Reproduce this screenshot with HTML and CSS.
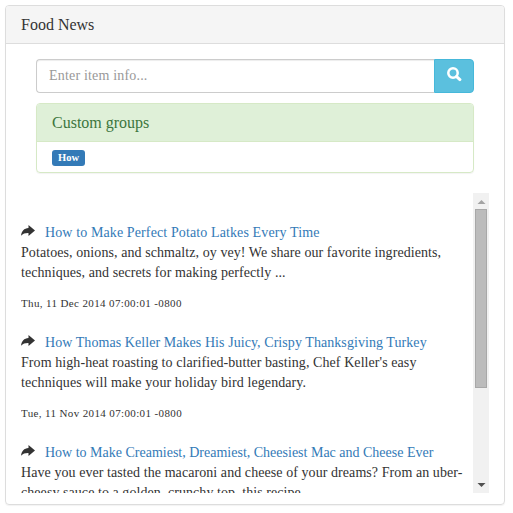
FILE: index.html
```
<!DOCTYPE html>
<html lang="en">
<head>
<meta charset="utf-8">
<title>Food News</title>
<link rel="stylesheet" href="styles.css">
</head>
<body>
<section class="panel">
  <h1 class="panel-heading">Food News</h1>
  <div class="panel-body">
    <form class="search">
      <input class="search-input" type="text" placeholder="Enter item info...">
      <button class="search-button" type="button" aria-label="Search">
        <svg width="15" height="15" viewBox="0 0 15 15"><circle cx="6" cy="6" r="4.700" fill="none" stroke="#fff" stroke-width="2.5"/><path d="M9.6 9.6L12.900 12.600" stroke="#fff" stroke-width="3" stroke-linecap="round"/></svg>
      </button>
    </form>
    <div class="groups">
      <h2 class="groups-heading">Custom groups</h2>
      <div class="groups-body"><span class="label">How</span></div>
    </div>
    <div class="feed">
      <div class="items">
        <article class="item">
          <div class="title"><svg class="share" width="14" height="12" viewBox="0 0 14 12"><path d="M7.500 0L14 5.500L7.500 11V8C4.400 7.900 2 8.500 .1 10.800C.2 6.300 3.300 3.200 7.500 3Z"/></svg><a class="t1">How to Make Perfect Potato Latkes Every Time</a></div>
          <p><span class="d1">Potatoes, onions, and schmaltz, oy vey! We share our favorite ingredients,</span><br><span class="d2">techniques, and secrets for making perfectly ...</span></p>
          <time>Thu, 11 Dec 2014 07:00:01 -0800</time>
        </article>
        <article class="item">
          <div class="title"><svg class="share" width="14" height="12" viewBox="0 0 14 12"><path d="M7.500 0L14 5.500L7.500 11V8C4.400 7.900 2 8.500 .1 10.800C.2 6.300 3.300 3.200 7.500 3Z"/></svg><a class="t2">How Thomas Keller Makes His Juicy, Crispy Thanksgiving Turkey</a></div>
          <p><span class="d3">From high-heat roasting to clarified-butter basting, Chef Keller's easy</span><br><span class="d4">techniques will make your holiday bird legendary.</span></p>
          <time>Tue, 11 Nov 2014 07:00:01 -0800</time>
        </article>
        <article class="item">
          <div class="title"><svg class="share" width="14" height="12" viewBox="0 0 14 12"><path d="M7.500 0L14 5.500L7.500 11V8C4.400 7.900 2 8.500 .1 10.800C.2 6.300 3.300 3.200 7.500 3Z"/></svg><a class="t3">How to Make Creamiest, Dreamiest, Cheesiest Mac and Cheese Ever</a></div>
          <p><span class="d5">Have you ever tasted the macaroni and cheese of your dreams? From an uber-</span><br><span class="d6">cheesy sauce to a golden, crunchy top, this recipe</span></p>
        </article>
      </div>
      <div class="scrollbar">
        <svg class="arrow" width="16" height="16" viewBox="0 0 16 16"><path d="M4.500 11L8.500 7L12.500 11Z" fill="#a3a3a3"/></svg>
        <div class="thumb"></div>
        <svg class="arrow arrow-down" width="16" height="16" viewBox="0 0 16 16"><path d="M4.500 6L8.500 10L12.500 6Z" fill="#505050"/></svg>
      </div>
    </div>
  </div>
</section>
</body>
</html>
```
FILE: styles.css
```
* { box-sizing: border-box; }
body {
  margin: 0;
  padding: 5px;
  overflow: hidden;
  background: #fff;
  color: #333;
  font: 14px/20px "Liberation Serif", "Times New Roman", serif;
}
.panel {
  width: 500px;
  height: 500px;
  border: 1px solid #ddd;
  border-radius: 4px;
  box-shadow: 0 1px 1px rgba(0, 0, 0, .05);
}
.panel-heading {
  margin: 0;
  height: 38px;
  padding: 10px 15px;
  border-bottom: 1px solid #ddd;
  border-radius: 3px 3px 0 0;
  background: #f5f5f5;
  font-size: 16px;
  font-weight: 400;
  line-height: 18px;
}
.panel-body { padding: 15px; }
.search { display: flex; margin: 0 15px 10px; height: 34px; }
.search-input {
  flex: 1;
  min-width: 0;
  padding: 6px 12px;
  border: 1px solid #ccc;
  border-right: 0;
  border-radius: 4px 0 0 4px;
  box-shadow: inset 0 1px 1px rgba(0, 0, 0, .075);
  font: inherit;
  letter-spacing: .18px;
}
.search-input::placeholder { color: #999; opacity: 1; }
.search-button {
  width: 40px;
  padding: 0 0 3px 1px;
  display: flex;
  align-items: center;
  justify-content: center;
  border: 1px solid #46b8da;
  border-radius: 0 4px 4px 0;
  background: #5bc0de;
}
.groups {
  margin: 0 15px 20px;
  height: 70px;
  border: 1px solid #d6e9c6;
  border-radius: 4px;
  box-shadow: 0 1px 1px rgba(0, 0, 0, .05);
}
.groups-heading {
  margin: 0;
  height: 38px;
  padding: 10px 15px;
  border-bottom: 1px solid #d6e9c6;
  border-radius: 3px 3px 0 0;
  background: #dff0d8;
  color: #3c763d;
  font-size: 16px;
  font-weight: 400;
  line-height: 18px;
}
.groups-body { display: flex; padding: 8px 15px; }
.label {
  width: 33px;
  height: 16px;
  border-radius: 3px;
  background: #337ab7;
  color: #fff;
  font-size: 10.5px;
  font-weight: 700;
  line-height: 15px;
  text-align: center;
}
.feed { display: flex; height: 300px; overflow: hidden; }
.items { flex: 1; min-width: 0; padding-top: 30px; white-space: nowrap; }
.item { height: 110px; }
.title { display: flex; color: #337ab7; }
.share { margin: 2px 10px 0 0; fill: #333; }
p { margin: 0 0 10px; }
time { display: block; font-size: 11px; letter-spacing: .37px; }
.t1 { letter-spacing: .114px; }
.t2 { letter-spacing: .065px; }
.d1, .d3 { letter-spacing: .075px; }
.d2, .d5 { letter-spacing: .07px; }
.d4 { letter-spacing: .085px; }
.d6 { letter-spacing: .06px; }
.scrollbar {
  width: 16px;
  display: flex;
  flex-direction: column;
  background: #f1f1f1;
}
.thumb { height: 179px; margin: 0 2px; border: 1px solid #a8a8a8; background: #bcbcbc; }
.arrow-down { margin-top: auto; }
```
